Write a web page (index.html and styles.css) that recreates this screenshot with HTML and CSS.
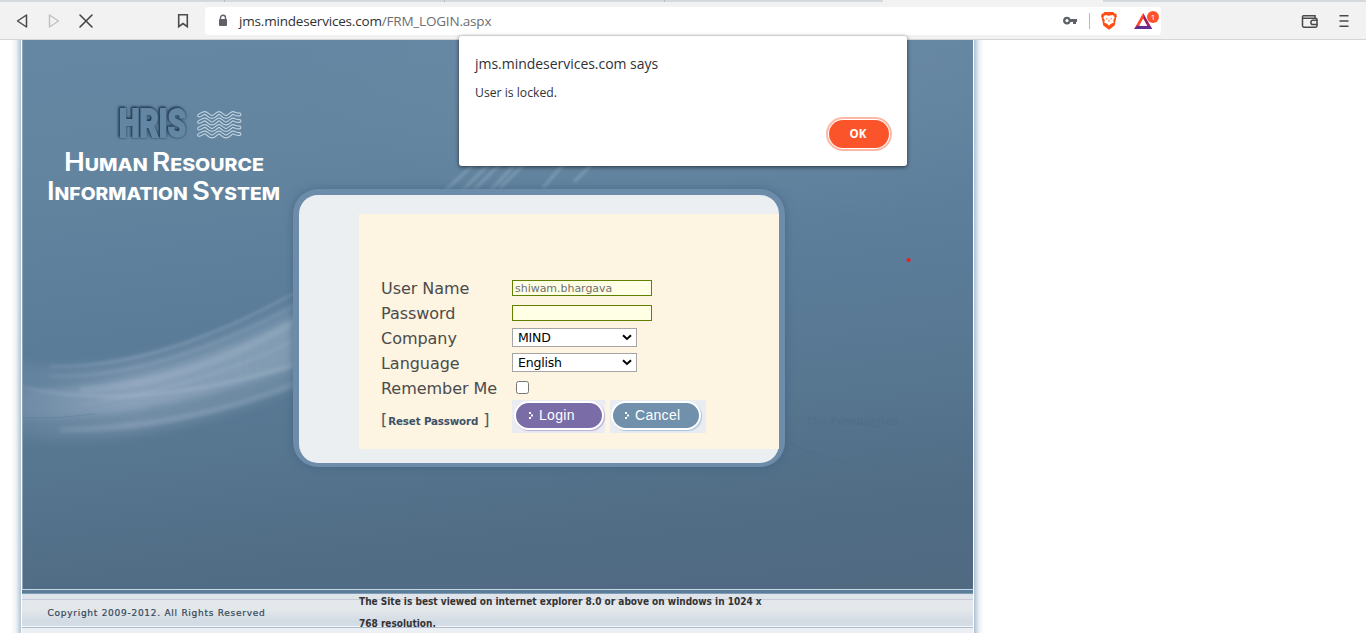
FILE: index.html
```html
<!DOCTYPE html>
<html lang="en">
<head>
<meta charset="utf-8">
<title>Human Resource Information System</title>
<link rel="stylesheet" href="styles.css">
</head>
<body>
<header class="browser">
  <div class="tabs"><span class="tab"></span><span class="tab"></span><span class="tab"></span><span class="tab tab-last"></span><span class="tab-active"></span></div>
  <div class="toolbar">
    <svg class="nav" width="110" height="36" viewBox="0 3 110 36" fill="none" stroke-linejoin="round" stroke-linecap="round">
      <path d="M26.500 15v12L17.500 21z" stroke="#4a4a4a" stroke-width="1.500"/>
      <path d="M49.500 15v12L58.500 21z" stroke="#c2c2c2" stroke-width="1.500"/>
      <path d="M80 15l12 12M92 15L80 27" stroke="#444" stroke-width="1.600"/>
    </svg>
    <svg class="bookmark" width="12" height="16" viewBox="0 0 12 16" fill="none"><path d="M1.700 1.700h8.600v12L6 10.500l-4.300 3.200z" stroke="#4c4c4c" stroke-width="1.600"/></svg>
    <div class="address">
      <svg class="lock" width="10" height="14" viewBox="0 0 10 14"><path d="M2.500 6V3.800a2.500 2.500 0 0 1 5 0V6" fill="none" stroke="#5f6368" stroke-width="1.400"/><rect x="1" y="5" width="8" height="7" rx="1" fill="#5f6368"/></svg>
      <span class="url"><b>jms.mindeservices.com</b>/FRM_LOGIN.aspx</span>
      <svg class="badges" width="103" height="28" viewBox="1058 7 103 28">
        <path d="M1067 16.700a3.900 3.900 0 1 0 3.600 5.300h2.400v2h3v-2h1v-3h-6.400a3.900 3.900 0 0 0-3.600-2.300zm0 2.300a1.600 1.600 0 1 1 0 3.200 1.600 1.600 0 0 1 0-3.200z" fill="#5f6368"/>
        <path d="M1089.500 13v16" stroke="#b8b8b8"/>
        <path d="M1104.500 12h8.500l1.600 1.500 1.700.3.500 2.700-.7 1.500-1.400 7.500-5.700 4.200-5.700-4.200-1.500-7.500-.7-1.500.6-2.700 1.600-.3z" fill="#fb4f13"/>
        <path d="M1105 15l4 .7 4-.7 1.800 2.600-1.600 2.600.6 2.200-3.200 1.700-1.600 1.600-1.600-1.600-3.200-1.700.6-2.200-1.600-2.600z" fill="#fff"/>
        <path d="M1106 18.500l1.500.6m4.500-.6l-1.500.6M1109 19.500v2.500" stroke="#fb4f13" stroke-width=".8" fill="none"/>
        <path d="M1143.200 13l-9 16h3.500l5.500-10z" fill="#ff4724"/>
        <path d="M1143.200 13l9 16h-3.500l-5.500-10z" fill="#9e1f63"/>
        <path d="M1134.200 29l2.500-3.200h13l2.500 3.200z" fill="#662d91"/>
        <path d="M1143.200 18.800l4 7h-8z" fill="#fff"/>
        <circle cx="1153" cy="17" r="6" fill="#fb542b"/>
        <text x="1150.800" y="20" class="count">1</text>
      </svg>
    </div>
    <svg class="menu" width="50" height="16" viewBox="1301 13 50 16" fill="none" stroke="#4a4a4a" stroke-width="1.500">
      <path d="M1315 17.500v-1.800h-11.500a1 1 0 0 0-1 1v9a1.500 1.500 0 0 0 1.500 1.500h11.500a1.500 1.500 0 0 0 1.500-1.500v-6a1.500 1.500 0 0 0-1.500-1.500h-12.500"/>
      <path d="M1317.500 20.300h-4.500a2 2 0 0 0 0 4.200h4.500"/>
      <path d="M1339.500 15.700h9M1339.500 21h9M1339.500 26.300h9" stroke-width="1.600"/>
    </svg>
  </div>
</header>

<div class="site">
  <div class="edge edge-left"></div>
  <div class="frame">
    <main class="hero">
      <svg class="art" width="950" height="549" viewBox="23 40 950 549">
        <defs>
          <filter id="soft" x="-10%" y="-30%" width="120%" height="160%"><feGaussianBlur stdDeviation="3"/></filter>
          <filter id="fine" x="-10%" y="-30%" width="120%" height="160%"><feGaussianBlur stdDeviation="1.500"/></filter>
          <filter id="wide" x="-20%" y="-50%" width="140%" height="200%"><feGaussianBlur stdDeviation="6"/></filter>
          <linearGradient id="beam" gradientUnits="userSpaceOnUse" x1="20" x2="300" y1="0" y2="0"><stop offset="0" stop-color="#9db2c8" stop-opacity=".3"/><stop offset=".4" stop-color="#a0b2ca" stop-opacity=".8"/><stop offset="1" stop-color="#9fb6c8" stop-opacity=".6"/></linearGradient>
          <path id="wave" d="M199 3.500c3-1 4-2.500 6-2.500s4 4 7 4 5-4 7-4 4 4 7 4 5-4 7-4 3 2 6.500 1.500"/>
        </defs>
        <path d="M10 362Q130 386 305 298V382Q150 450 10 436z" fill="url(#beam)" opacity=".45" filter="url(#wide)"/>
        <path d="M10 390Q150 392 300 314V365Q150 422 10 420z" fill="url(#beam)" opacity=".65" filter="url(#soft)"/>
        <g fill="none" stroke="url(#beam)" filter="url(#fine)">
          <path d="M50 366Q160 370 305 287" stroke-width="3" opacity=".5"/>
          <path d="M50 376Q160 380 305 300" stroke-width="3" opacity=".35"/>
          <path d="M80 390Q190 385 305 316" stroke-width="7" opacity=".45"/>
          <path d="M80 405Q210 385 305 335" stroke-width="3" opacity=".4"/>
          <path d="M15 385Q130 416 305 362" stroke-width="4" opacity=".6"/>
          <path d="M60 430Q190 428 305 380" stroke-width="6" opacity=".4"/>
        </g>
        <path d="M23 418Q60 419 95 414" fill="none" stroke="#5c7c9b" stroke-width="1" opacity=".5"/>
        <g stroke="#a9bfd2" opacity=".38" stroke-width="3" filter="url(#fine)">
          <path d="M446 190l32-30M463 190l30-30M474 190l30-30M491 190l28-30M500 188l27-27M543 188l24-28M574 182l20-20"/>
        </g>
        <g class="ghost"><path d="M842 201h11v8h-11zM842 201l5.500 5 5.500-5" fill="none" stroke="#7894ad"/><text x="859" y="209" font-size="9.500">send to a friend</text><text x="806" y="425" font-size="10" class="ghost-dark">The Possibilities</text></g>
        <path d="M841 416q18 10 40 11M790 443q30 15 55 20" fill="none" stroke="#3f5d76" opacity=".2"/>
        <text class="hris" x="119" y="137" textLength="67" lengthAdjust="spacingAndGlyphs">HRIS</text>
        <g fill="none" stroke-linejoin="round" stroke-linecap="round">
          <g stroke="#bfd1de" stroke-width="3.900"><use href="#wave" y="112"/><use href="#wave" y="118.500"/><use href="#wave" y="125"/><use href="#wave" y="131.500"/></g>
          <g stroke="#5c7f9b" stroke-width="1.600"><use href="#wave" y="112"/><use href="#wave" y="118.500"/><use href="#wave" y="125"/><use href="#wave" y="131.500"/></g>
        </g>
        <text class="name" x="64" y="171" textLength="200" lengthAdjust="spacingAndGlyphs"><tspan class="cap">H</tspan>UMAN <tspan class="cap">R</tspan>ESOURCE</text>
        <text class="name" x="47" y="200" textLength="233" lengthAdjust="spacingAndGlyphs"><tspan class="cap">I</tspan>NFORMATION <tspan class="cap">S</tspan>YSTEM</text>
        <circle cx="908.500" cy="260" r="2.100" fill="#e8201f"/>
      </svg>
      <section class="panel">
        <form class="login">
          <div class="row"><label>User Name</label><span class="field">shiwam.bhargava</span></div>
          <div class="row"><label>Password</label><span class="field"></span></div>
          <div class="row"><label>Company</label><span class="select">MIND<svg width="10" height="7" viewBox="0 0 10 7"><path d="M1 1.300l4 3.700 4-3.700" fill="none" stroke="#000" stroke-width="2"/></svg></span></div>
          <div class="row"><label>Language</label><span class="select">English<svg width="10" height="7" viewBox="0 0 10 7"><path d="M1 1.300l4 3.700 4-3.700" fill="none" stroke="#000" stroke-width="2"/></svg></span></div>
          <div class="row"><label>Remember Me</label><span class="check"></span></div>
          <div class="row actions">
            <span class="reset">[<b>Reset Password</b> ]</span>
            <span class="btn btn-login"><span class="pill"><svg width="5" height="7" viewBox="0 0 5 7" fill="#fff"><path d="M0 0h2v2h-2zM2 2.500h2v2h-2zM0 5h2v2h-2z"/></svg>Login</span></span>
            <span class="btn btn-cancel"><span class="pill"><svg width="5" height="7" viewBox="0 0 5 7" fill="#fff"><path d="M0 0h2v2h-2zM2 2.500h2v2h-2zM0 5h2v2h-2z"/></svg>Cancel</span></span>
          </div>
        </form>
      </section>
    </main>
    <footer class="footer">
      <p class="copy">Copyright 2009-2012. All Rights Reserved</p>
      <p class="notice">The Site is best viewed on internet explorer 8.0 or above on windows in 1024 x<br>768 resolution.</p>
    </footer>
  </div>
  <div class="edge edge-right"></div>
</div>

<div class="dialog" role="alertdialog">
  <h1>jms.mindeservices.com says</h1>
  <p>User is locked.</p>
  <button class="ok">OK</button>
</div>
</body>
</html>
```
FILE: styles.css
```css
* { box-sizing: border-box; }
body { margin: 0; width: 1366px; height: 633px; overflow: hidden; background: #fff; font-family: "DejaVu Sans", Verdana, sans-serif; }

.browser { height: 40px; background: #f2f2f2; border-bottom: 1px solid #d3d5d7; }
.tabs { display: flex; height: 2px; background: #d5d9dd; }
.tab { width: 220px; border-right: 1px solid #b7bbbf; }
.tab:first-child { width: 225px; }
.tab-last { width: 218px; border: 0; }
.tab-active { width: 220px; background: #f2f2f2; }
.toolbar { display: flex; align-items: center; height: 37px; }
.nav { margin-right: 67px; }
.bookmark { margin-right: 16px; }
.address { display: flex; align-items: center; width: 956px; height: 28px; padding-left: 13px; background: #fff; border-radius: 4px; }
.lock { margin-right: 11px; }
.url { flex: 1; font: 13.500px/20px "Open Sans", "Noto Sans", sans-serif; color: #6b6e72; letter-spacing: -0.19px; }
.url b { font-weight: 400; color: #303134; }
.count { font: 8px "Open Sans", sans-serif; fill: #fff; }
.menu { margin-left: 140px; }

.site { display: flex; height: 593px; }
.edge { width: 10px; }
.edge-left { margin-left: 11px; background: linear-gradient(to right, #fff, #eef2f6 50%, #b3c5d4); }
.edge-right { background: linear-gradient(to left, #fff, #eaf0f5 50%, #adc1d2); }
.frame { width: 953px; border: solid #fff; border-width: 0 1px; }
.hero { position: relative; width: 951px; height: 549px; padding: 149px 0 0 270px; border-left: 1px solid #8da5b9; background: radial-gradient(ellipse 420px 190px at 72% 0, #7290aa66, transparent), linear-gradient(174deg, #6587a4 0, #64859f 20%, #5c7e9b 42%, #577690 66%, #506b84 88%, #506a82 100%); }
.art { position: absolute; left: 0; top: 0; }
.ghost { font-family: "DejaVu Sans", sans-serif; font-weight: 700; fill: #6c8ca8; opacity: 0.15; }
.ghost-dark { fill: #405b73; }
.hris { font: 900 39px Roboto, sans-serif; fill: #6386a3; stroke: #6386a3; stroke-width: 1.800px; filter: drop-shadow(-1px -1px 1px #20384e) drop-shadow(0.500px 0.500px 1px #2f4b64); }
.name { font: 800 17.500px Inter, sans-serif; fill: #fff; }
.cap { font-size: 25px; font-weight: 600; }

.panel { position: relative; width: 492px; height: 278px; padding: 19px 0 15px 60px; border: solid #6c8ca9; border-width: 6px 6px 4px; border-radius: 25px; background: #6c8ca9; box-shadow: 0 0 9px #385c7b99; }
.panel::before { content: ""; position: absolute; inset: 0; border-radius: 19px; background: #ebeff2; }
.login { position: relative; height: 235px; padding: 61px 0 0 22px; background: #fdf4e1; color: #4b4b4b; }
.row { display: flex; align-items: center; height: 25px; }
.row label { width: 131px; padding-top: 2px; font-size: 16px; letter-spacing: -0.04px; white-space: nowrap; }
.field { width: 140px; height: 16px; padding-left: 2px; border: 1px solid #5f8000; background: #ffffe6; color: #707070; font-size: 11px; line-height: 15px; letter-spacing: -0.03px; }
.select { display: flex; align-items: center; justify-content: space-between; width: 125px; height: 19px; padding: 0 4px 0 5px; border: 1px solid #a5a5a5; background: #fff; color: #000; font-size: 12.500px; letter-spacing: -0.2px; }
.check { width: 13px; height: 13px; margin-left: 4px; border: 1px solid #767676; border-radius: 2.500px; background: #fff; }
.actions { height: 33px; }
.reset { width: 131px; padding-top: 5px; font-size: 16px; color: #4b5967; white-space: pre; }
.reset b { margin-left: 1px; font-size: 10.300px; letter-spacing: -0.15px; color: #3d5268; }
.btn { width: 93px; height: 33px; padding: 1px 2px; background: #ebebf2; }
.btn-cancel { width: 96px; margin-left: 5px; background: #e9edf1; }
.pill { display: flex; align-items: center; gap: 5px; width: 90px; height: 29px; padding: 0 0 2px 13px; border: 2px solid #fff; border-radius: 15px; color: #fff; font: 14px "Liberation Sans", sans-serif; letter-spacing: 0.3px; }
.pill svg { margin-top: 1px; }
.btn-login .pill { background: #7a6ca6; box-shadow: 1px 1px 1px #b9aed5; }
.btn-cancel .pill { margin-left: -1px; padding-left: 12px; background: #7090ab; box-shadow: 1px 1px 1px #abc4d7; }

.footer { display: flex; height: 44px; border-top: 1px solid #c6d8e5; background: linear-gradient(#5c7d99 0 3px, #7e9cb5 3px 4px, #dfe4ea 4px 9px, #c6cdd8 9px 10px, #e4e8ed 10px, #e2e7ea 20px, #d2dae4 32px, #d5dde6 36px, #f5f7f9 36px 37px, #adbdcf 37px 38px, #eceff3 38px); }
.copy { width: 337px; margin: 0; padding: 17px 0 0 25.500px; color: #34475a; font-size: 9px; line-height: 12px; letter-spacing: 0.73px; white-space: nowrap; -webkit-text-stroke: 0.2px #34475a; }
.notice { margin: 0; padding-top: 1px; color: #333; font-family: "DejaVu Sans Condensed", "DejaVu Sans", sans-serif; font-stretch: condensed; font-size: 10px; font-weight: 700; line-height: 22px; white-space: nowrap; }

.dialog { position: absolute; left: 459px; top: 36px; width: 448px; height: 130px; padding: 18px 16px; border-radius: 3px; background: #fff; box-shadow: 0 1px 4px #0009; font-family: "Open Sans", "Noto Sans", sans-serif; color: #303238; }
.dialog h1 { margin: 0; font-size: 14px; font-weight: 400; line-height: 20px; letter-spacing: -0.03px; }
.dialog p { margin: 10px 0 0; font-size: 12.200px; line-height: 18px; }
.ok { display: block; width: 60px; height: 28px; margin: 18px 2px 0 auto; padding: 0 2px 2px 0; border: 0; border-radius: 14px; background: #fb542b; color: #fff; font: 700 11.500px "Open Sans", sans-serif; box-shadow: 0 0 0 1px #fff, 0 0 0 3px #fdb7a5; }
```
